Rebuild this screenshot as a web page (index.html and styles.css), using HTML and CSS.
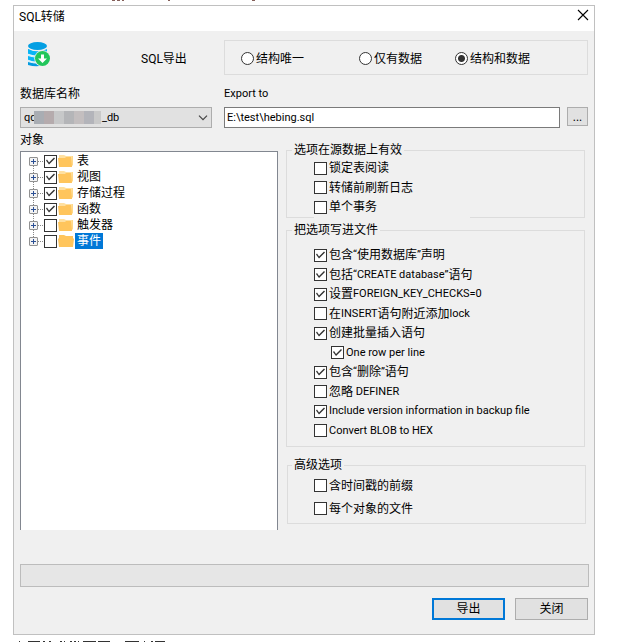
FILE: index.html
```html
<!DOCTYPE html>
<html lang="zh-CN">
<head>
<meta charset="utf-8">
<title>SQL转储</title>
<link rel="stylesheet" href="styles.css">
</head>
<body>
<svg class="sliver sliver-top" width="642" height="2" aria-hidden="true">
  <path d="M112 0.5h3M117 0.5h3M122 0.5h2M168 0.5h2M252 0.5h3" stroke="#85605a"/>
</svg>
<svg class="sliver sliver-bottom" width="642" height="1" aria-hidden="true">
  <path d="M19 .5h1M28 .5h12M43 .5h2M49 .5h2M60 .5h2M64 .5h1M70 .5h2M74 .5h2M78 .5h1M83 .5h13M98 .5h12M125 .5h14M144 .5h1M151 .5h2M155 .5h10" stroke="#333"/>
</svg>
<main class="dialog">
  <header class="titlebar">
    <h1>SQL转储</h1>
    <button class="close" type="button" aria-label="关闭窗口">
      <svg width="12" height="12" viewBox="0 0 12 12"><path d="M1 1l10 10M11 1L1 11" stroke="#000" stroke-width="1.1"/></svg>
    </button>
  </header>
  <form class="content">
    <div class="top">
      <div class="brand">
        <svg width="24" height="26" viewBox="0 0 24 26" aria-hidden="true">
          <path d="M0 7q9.500 5 19 0v5H0z" fill="#08b5f5"/>
          <path d="M0 7q3 2 8 2.500l11-.5v4q-9.500 3-19 0z" fill="#08b5f5"/>
          <path d="M0 14q8 3 19 1v4q-10 3-19 0z" fill="#08b5f5"/>
          <path d="M0 20q8 3 19 1v1q-9 4-19 1z" fill="#039be0"/>
          <path d="M0 12.500q6 2.500 12 1.500M0 18.500q5 2.500 10 1.500" stroke="#e4f5fb" stroke-width="1.500" fill="none"/>
          <ellipse cx="9.500" cy="4" rx="9.500" ry="4" fill="#039fe3"/>
          <circle cx="14.500" cy="16.500" r="8.200" fill="#f0f0f0"/>
          <circle cx="14.500" cy="16.500" r="7.500" fill="#22c65b"/>
          <path d="M13 12.500h3v4h3l-4.500 4.500-4.500-4.500h3z" fill="#fff"/>
        </svg>
        <span>SQL导出</span>
      </div>
      <div class="modes" role="radiogroup" aria-label="SQL导出">
        <label><input type="radio" name="mode">结构唯一</label>
        <label><input type="radio" name="mode">仅有数据</label>
        <label><input type="radio" name="mode" checked>结构和数据</label>
      </div>
      <div class="field">
        <label for="db">数据库名称</label>
        <div class="select">
          <select id="db"><option>qd&nbsp;&nbsp;&nbsp;&nbsp;&nbsp;&nbsp;&nbsp;&nbsp;&nbsp;&nbsp;&nbsp;&nbsp;&nbsp;&nbsp;&nbsp;&nbsp;&nbsp;&nbsp;&nbsp;&nbsp;&nbsp;&nbsp;&nbsp;&nbsp;_db</option></select>
          <span class="mosaic"></span>
          <svg class="chevron" width="10" height="6" viewBox="0 0 10 6"><path d="M1 .7l4 4 4-4" fill="none" stroke="#444" stroke-width="1.200"/></svg>
        </div>
      </div>
      <div class="field">
        <label class="en" for="path">Export to</label>
        <div class="path">
          <input id="path" type="text" value="E:\test\hebing.sql">
          <button type="button" class="browse">...</button>
        </div>
      </div>
    </div>
    <div class="panes">
      <section class="objects">
        <h2>对象</h2>
        <ul class="tree">
          <li><button type="button" class="expand" aria-label="展开"></button><label><input type="checkbox" checked><svg class="folder"><use href="#folder"/></svg><span>表</span></label></li>
          <li><button type="button" class="expand" aria-label="展开"></button><label><input type="checkbox" checked><svg class="folder"><use href="#folder"/></svg><span>视图</span></label></li>
          <li><button type="button" class="expand" aria-label="展开"></button><label><input type="checkbox" checked><svg class="folder"><use href="#folder"/></svg><span>存储过程</span></label></li>
          <li><button type="button" class="expand" aria-label="展开"></button><label><input type="checkbox" checked><svg class="folder"><use href="#folder"/></svg><span>函数</span></label></li>
          <li><button type="button" class="expand" aria-label="展开"></button><label><input type="checkbox"><svg class="folder"><use href="#folder"/></svg><span>触发器</span></label></li>
          <li class="selected"><button type="button" class="expand" aria-label="展开"></button><label><input type="checkbox"><svg class="folder"><use href="#folder-closed"/></svg><span>事件</span></label></li>
        </ul>
      </section>
      <div class="options">
        <fieldset class="source">
          <legend>选项在源数据上有效</legend>
          <label><input type="checkbox">锁定表阅读</label>
          <label><input type="checkbox">转储前刷新日志</label>
          <label><input type="checkbox">单个事务</label>
        </fieldset>
        <fieldset class="write">
          <legend>把选项写进文件</legend>
          <label><input type="checkbox" checked>包含<span class="en">“</span>使用数据库<span class="en">”</span>声明</label>
          <label><input type="checkbox" checked>包括<span class="en">“CREATE database”</span>语句</label>
          <label><input type="checkbox" checked>设置<span class="en">FOREIGN_KEY_CHECKS=0</span></label>
          <label><input type="checkbox">在<span class="en">INSERT</span>语句附近添加<span class="en">lock</span></label>
          <label><input type="checkbox" checked>创建批量插入语句</label>
          <label class="sub"><input type="checkbox" checked><span class="en">One row per line</span></label>
          <label><input type="checkbox" checked>包含<span class="en">“</span>删除<span class="en">”</span>语句</label>
          <label><input type="checkbox">忽略<span class="en">&nbsp;DEFINER</span></label>
          <label><input type="checkbox" checked><span class="en">Include version information in backup file</span></label>
          <label><input type="checkbox"><span class="en">Convert BLOB to HEX</span></label>
        </fieldset>
        <fieldset class="advanced">
          <legend>高级选项</legend>
          <label><input type="checkbox">含时间戳的前缀</label>
          <label><input type="checkbox">每个对象的文件</label>
        </fieldset>
      </div>
    </div>
    <div class="progress" role="progressbar" aria-label="进度"></div>
    <footer class="actions">
      <button type="button" class="primary">导出</button>
      <button type="button">关闭</button>
    </footer>
  </form>
</main>
<svg width="0" height="0" class="defs" aria-hidden="true">
  <symbol id="folder" viewBox="0 0 16 14">
    <path d="M1 1h5l2 1h6v9H1z" fill="#ffe0a0"/>
    <path d="M14 2h1v9l-2 2z" fill="#ffd88a"/>
    <path d="M0 4h7l1-1h5l1 10H1z" fill="#ffc55c"/>
  </symbol>
  <symbol id="folder-closed" viewBox="0 0 16 14">
    <path d="M1 1h5l2 1h7v2l1 1-1 8H1L0 5l1-1z" fill="#ffc55c"/>
  </symbol>
</svg>
</body>
</html>
```

FILE: styles.css
```css
* { box-sizing: border-box; }

body {
  margin: 0;
  padding: 5px 47px 0 13px;
  background: #fff;
  color: #000;
  font: 12px/16px Roboto, "Noto Sans CJK SC", sans-serif;
}

button, input, select { font: inherit; color: inherit; margin: 0; }
h1, h2 { margin: 0; font-size: 12px; font-weight: 400; }
.en { font-size: 11px; }
.defs { position: absolute; }

.sliver { position: absolute; left: 0; }
.sliver-top { top: 0; }
.sliver-bottom { top: 641px; }

.dialog { border: 1px solid #c0c0c0; background: #f0f0f0; }

.titlebar {
  display: flex;
  justify-content: space-between;
  align-items: flex-start;
  height: 25px;
  padding: 2px 5px;
  background: #fff;
}
.titlebar h1 { line-height: 18px; }
.close { border: 0; padding: 0; background: none; width: 12px; height: 14px; display: flex; align-items: center; }

.content { padding: 9px 5px 14px 6px; }

.top {
  display: grid;
  grid-template-columns: 192px 1fr;
  gap: 11px 12px;
  padding-right: 1px;
}
.brand { display: flex; align-items: center; height: 35px; padding-left: 8px; }
.brand svg { align-self: flex-start; margin-top: 2px; }
.brand span { margin-left: 89px; line-height: 18px; padding-top: 2px; }
.modes { display: flex; align-items: center; padding: 2px 0 0 16px; border: 1px solid #dcdcdc; }
.modes label { display: flex; align-items: center; gap: 2px; width: 118px; line-height: 18px; white-space: nowrap; }
.modes label:nth-child(2) { width: 96px; }

.field { display: flex; flex-direction: column; gap: 5px; }
.field > label { line-height: 16px; }
.select { position: relative; }
select {
  appearance: none;
  display: block;
  width: 100%;
  height: 21px;
  padding: 0 3px;
  border: 1px solid #adadad;
  border-radius: 0;
  background: #e1e1e1;
  font-size: 11px;
}
.mosaic {
  position: absolute;
  left: 14px;
  top: 4px;
  width: 67px;
  height: 13px;
  background: linear-gradient(90deg, #a9adb3 0 10px, #b5abad 10px 20px, #c7c8c9 20px 30px, #b4b5b8 30px 40px, #c3bebf 40px 50px, #b3b4ba 50px 60px, #c9c9c9 60px);
}
.chevron { position: absolute; right: 4px; top: 8px; }
.path { display: flex; gap: 7px; }
.path input {
  flex: 1;
  min-width: 0;
  height: 21px;
  padding: 0 2px;
  border: 1px solid #7a7a7a;
  background: #fff;
  font-size: 11px;
}
.browse { width: 21px; height: 19px; padding: 0; border: 1px solid #adadad; background: #e1e1e1; }

.panes { display: grid; grid-template-columns: 258fr 303fr; gap: 8px; padding-top: 4px; }
.objects { display: flex; flex-direction: column; }
.objects h2 { margin-bottom: 3px; }
.tree {
  flex: 1;
  margin: 0;
  padding: 1px 8px;
  list-style: none;
  background: #fff;
  border: 1px solid #828790;
  border-bottom: 0;
}
.tree li { position: relative; display: flex; align-items: center; height: 16px; }
.tree li::before {
  content: "";
  position: absolute;
  left: 9px;
  top: 8px;
  width: 5px;
  border-top: 1px dotted #888;
}
.tree li:not(:last-child)::after {
  content: "";
  position: absolute;
  left: 4px;
  top: 13px;
  height: 7px;
  border-left: 1px dotted #888;
}
.tree label { display: flex; align-items: center; margin-left: 6px; }
.tree span { padding: 0 2px; margin-left: 1px; }
.selected span { background: #0078d7; color: #fff; }
.folder { width: 16px; height: 14px; margin-left: 1px; }
.expand {
  width: 9px;
  height: 9px;
  padding: 0;
  border: 1px solid #919191;
  border-radius: 1px;
  background:
    linear-gradient(#2b4f94, #2b4f94) center / 5px 1px no-repeat,
    linear-gradient(#2b4f94, #2b4f94) center / 1px 5px no-repeat,
    #f3f3f3;
}

.options { padding: 10px 4px 6px 0; }
fieldset { position: relative; margin: 0; padding: 0 27px; border: 1px solid #dcdcdc; }
legend { margin-left: -22px; padding: 0 2px; }
fieldset label { display: flex; align-items: center; height: 19px; line-height: 18px; white-space: nowrap; }
fieldset label:nth-of-type(odd) { height: 20px; }
fieldset input { margin-right: 2px; }
.source { margin-bottom: 4px; }
.source::after {
  content: "";
  position: absolute;
  left: 27px;
  bottom: -1px;
  width: 156px;
  height: 1px;
  background: #f0f0f0;
}
.write { margin-bottom: 10px; padding-top: 7px; padding-bottom: 6px; }
.advanced { margin: 0 -1px 0 1px; padding: 1px 26px 3px; }
.advanced label, .advanced label:nth-of-type(odd) { height: 23px; }
fieldset .sub { padding-left: 17px; }

input[type="checkbox"], input[type="radio"] {
  appearance: none;
  flex: none;
  width: 13px;
  height: 13px;
  border: 1px solid #333;
  background: #fff;
}
input[type="radio"] { border-radius: 50%; }
input[type="radio"]:checked { background: radial-gradient(circle, #333 0 3px, #fff 4px); }
input[type="checkbox"]:checked::before {
  content: "";
  display: block;
  width: 11px;
  height: 11px;
  background: #333;
  clip-path: polygon(1px 5px, 2px 4px, 4px 7px, 9px 2px, 10px 3px, 4px 9px);
}

.progress { height: 23px; margin-top: 34px; border: 1px solid #bcbcbc; background: #e6e6e6; }
.actions { display: flex; justify-content: flex-end; gap: 10px; margin-top: 11px; padding-right: 1px; }
.actions button { width: 73px; height: 22px; padding: 0; border: 1px solid #adadad; background: #e1e1e1; }
.actions .primary { border: 2px solid #0078d7; }
```
